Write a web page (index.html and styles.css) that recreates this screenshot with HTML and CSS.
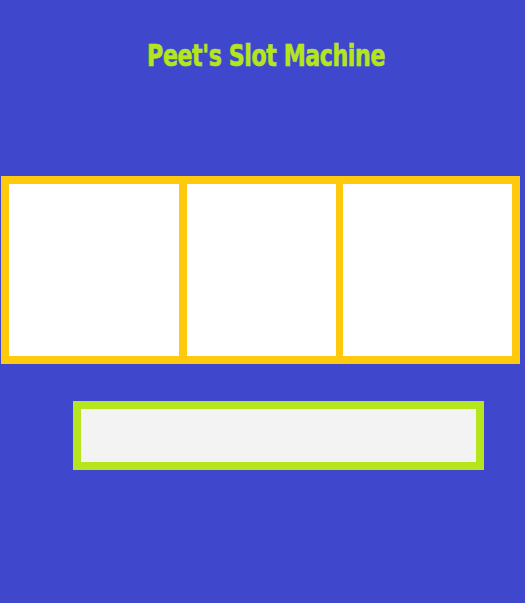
FILE: index.html
```html
<!DOCTYPE html>
<html>
<head>
<meta charset="utf-8">
<title>Peet's Slot Machine</title>
<link rel="stylesheet" href="styles.css">
</head>
<body>
<header class="title-bar">
  <h1 class="title">Peet's Slot Machine</h1>
</header>
<section class="reels">
  <div class="reel reel-1"></div>
  <div class="reel reel-2"></div>
  <div class="reel reel-3"></div>
</section>
<section class="result-wrap">
  <div class="result"></div>
</section>
</body>
</html>
```

FILE: styles.css
```css
html, body {
  margin: 0;
  padding: 0;
  background: #3f48cc;
  height: 100%;
}
body {
  padding-left: 1px;
}
.title-bar {
  height: 176px;
  display: flex;
  justify-content: center;
  padding-left: 6px;
  box-sizing: border-box;
}
.title {
  margin: 36px 0 0;
  height: 40px;
  line-height: 40px;
  font-family: "DejaVu Sans Condensed", "Liberation Sans", sans-serif;
  font-weight: bold;
  font-size: 30px;
  letter-spacing: -0.5px;
  color: #b5e61d;
  -webkit-text-stroke: 0.6px #b5e61d;
  white-space: nowrap;
  transform: scale(0.82, 1.02);
  transform-origin: center;
}
.reels {
  display: flex;
  width: 519px;
  box-sizing: border-box;
  background: #ffc90e;
  padding: 8px;
  height: 188px;
}
.reel {
  background: #ffffff;
  height: 172px;
}
.reel-1 { width: 170px; }
.reel-2 { width: 149px; margin-left: 8px; }
.reel-3 { width: 169px; margin-left: 7px; }
.result-wrap {
  padding: 37px 0 0 72px;
}
.result {
  width: 411px;
  height: 69px;
  box-sizing: border-box;
  border: 8px solid #b5e61d;
  background: #f3f3f3;
}
```
